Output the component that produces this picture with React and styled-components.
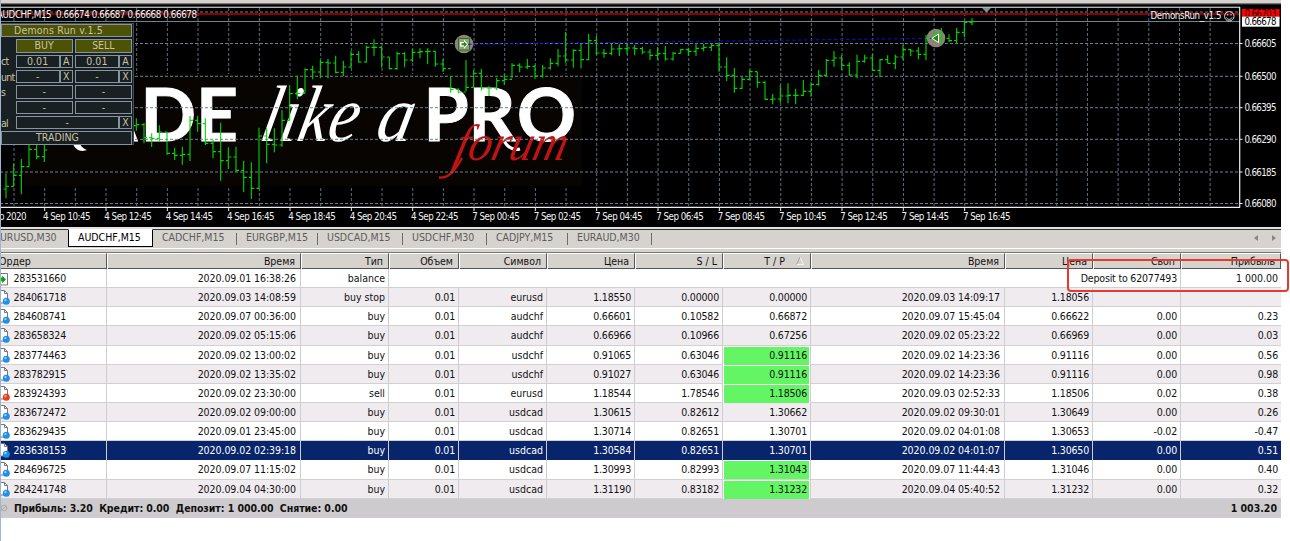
import styled, { createGlobalStyle, css } from "styled-components";

const GlobalStyle = createGlobalStyle`
  * {
    box-sizing: border-box;
  }

  body {
    margin: 0;
    background: #fff;
    font-family: "DejaVu Sans Condensed", "DejaVu Sans", sans-serif;
    font-stretch: condensed;
    font-size: 10.5px;
    color: #111;
    overflow: hidden;
  }
`;

const Terminal = styled.div`
  position: relative;
  width: 1290px;
  height: 541px;
  overflow: hidden;
  border-left: 1px solid #9fb4cf;
  background: #fff;
`;

const Content = styled.div`
  width: 1280px;
  display: flex;
  flex-direction: column;
`;

const ToolbarEdge = styled.div`
  height: 3px;
  background: #d6d3ce;
`;

const ChartWindow = styled.div`
  position: relative;
  height: 226px;
  background: #000;
`;

const ChartSvg = styled.svg`
  display: block;
  margin-left: -1px;

  text {
    font-family: "DejaVu Sans Condensed", "DejaVu Sans", sans-serif;
    font-stretch: condensed;
    font-size: 9.7px;
    fill: #f2f2f2;
  }

  .sans {
    font-family: Lato, sans-serif;
    font-weight: 700;
    font-stretch: normal;
    font-size: 73px;
    fill: #fff;
    stroke: #fff;
    stroke-width: 1px;
  }

  .script {
    font-family: "Liberation Serif", serif;
    font-style: italic;
    font-stretch: normal;
    font-size: 80px;
    fill: #fff;
  }

  .red {
    font-size: 51px;
    fill: #c01414;
  }
`;

/* trade panel */

const Panel = styled.div`
  position: absolute;
  left: 0;
  top: 20px;
  width: 133px;
  height: 122px;
  padding: 0 1px 1px 0;
  border-right: 1px solid #3d4c55;
  border-top: 1px solid #3d4c55;
  border-bottom: 1px solid #3d4c55;
  background: #182024;
  color: #cbc3a0;
  font-size: 10.5px;
  display: flex;
  flex-direction: column;
  gap: 2px;
`;

const PanelRow = styled.div`
  display: flex;
  gap: 2px;
  height: 13.35px;
`;

const PanelLabel = styled.div`
  width: 12.5px;
  display: flex;
  align-items: center;
  white-space: nowrap;
  letter-spacing: -0.7px;
`;

const Field = styled.div`
  flex: 1;
  display: flex;
  border: 1px solid #8794a0;
  background: ${(p) => (p.$olive ? "#4c5206" : "#182024")};
  line-height: 11.5px;
  text-align: center;
`;

const FieldText = styled.span`
  flex: 1;
  letter-spacing: ${(p) => p.$spacing || "0"};
`;

const FieldKey = styled.span`
  width: 13px;
  border-left: 2px solid #8794a0;
`;

/* tabs */

const Tabs = styled.div`
  display: flex;
  height: 20px;
  border-bottom: 1px solid #fff;
  background: #d6d3ce;
`;

const Tab = styled.div`
  position: relative;
  width: ${(p) => p.$w}px;
  height: 18px;
  padding: 0 0 0 9px;
  border-top: 1px solid #333;
  color: #5c5c5c;
  line-height: 15px;
  white-space: nowrap;
  letter-spacing: -0.02px;

  &::after {
    content: "";
    position: absolute;
    right: 0;
    top: 3px;
    width: 1px;
    height: 12px;
    background: #6b6b6b;
  }

  ${(p) =>
    p.$cut &&
    css`
      padding: 0;
      text-indent: -7px;
      &::after {
        display: none;
      }
    `}

  ${(p) =>
    p.$active &&
    css`
      border: 1px solid #000;
      border-top-color: #fff;
      background: #fff;
      color: #000;
      &::after {
        display: none;
      }
    `}
`;

const TabsRest = styled.div`
  flex: 1;
  border-top: 1px solid #333;
  display: flex;
  justify-content: flex-end;
  gap: 14px;
  padding: 5px 5px 0 0;
  height: 18px;
`;

/* history table */

const Table = styled.div`
  padding-top: 3px;
  background: #d6d3ce;
`;

const Row = styled.div`
  display: grid;
  grid-template-columns: 106px 194px 88px 70px 88px 88px 88px 88px 194px 88px 88px 100px;
  height: 19.15px;
  background: ${(p) => (p.$selected ? "#08246b" : p.$odd ? "#efebef" : "#fff")};
  color: ${(p) => (p.$selected ? "#fff" : "#111")};
  border-bottom: 1px solid ${(p) => (p.$selected ? "#08246b" : "#d2d0d2")};
`;

const HeadRow = styled(Row)`
  height: 17px;
  background: #d6d3ce;
  border-top: 1px solid #777;
  border-bottom: 1px solid #555;
`;

const Cell = styled.div`
  grid-column: span ${(p) => p.$span || 1};
  padding-right: 3px;
  border-right: 1px solid #cfcdcf;
  text-align: right;
  line-height: 19px;
  white-space: nowrap;
  letter-spacing: ${(p) => (p.$text ? "0" : "-0.18px")};
  ${(p) =>
    p.$date &&
    css`
      padding-right: 4px;
      letter-spacing: -0.06px;
    `}
  ${(p) =>
    p.$hit &&
    css`
      background: #63f563;
      box-shadow: inset 1px 1px #fff, inset -1px 0 #fff;
    `}
  &:last-child {
    border-right: 0;
  }
`;

const HeadCell = styled(Cell)`
  padding-right: 5px;
  border-right: 1px solid #555;
  border-left: 1px solid #fff;
  border-top: 1px solid #fff;
  line-height: 15px;
  letter-spacing: 0;
  &:first-child {
    text-align: left;
    border-left: 0;
    text-indent: -2px;
  }
  &:last-child {
    border-right: 1px solid #555;
  }
`;

const OrderCell = styled(Cell)`
  display: flex;
  align-items: center;
  text-align: left;
  gap: 3.5px;
`;

const Summary = styled.div`
  display: flex;
  justify-content: space-between;
  align-items: center;
  height: 19px;
  padding: 0 4px 0 0;
  background: #cecbce;
  font-weight: bold;
  white-space: pre;
`;

const SummaryText = styled.div`
  display: flex;
  align-items: center;
  gap: 5px;
  letter-spacing: -0.07px;
`;

const Highlight = styled.div`
  position: absolute;
  left: 1066px;
  top: 259px;
  width: 222px;
  height: 33px;
  border: 2px solid #e8392e;
  border-radius: 4px;
`;

// [high, low, close] in thirds of a pixel, one entry per M15 bar
const PITCH = 23 / 3;
const barGroups = [
  {
    start: 0,
    open: 567,
    bars: [
      [520, 595, 559], [491, 559, 526], [477, 583, 500], [430, 500, 448], [430, 478, 470], [430, 486, 450],
    ],
  },
  {
    start: 17,
    open: 377,
    bars: [
      [355, 392, 374], [369, 430, 413], [400, 441, 415], [376, 425, 396], [395, 464, 460], [443, 480, 466],
      [440, 494, 463], [348, 483, 361], [347, 395, 371], [355, 435, 430], [419, 475, 455], [368, 542, 482],
      [442, 507, 471], [440, 517, 511], [482, 577, 532], [487, 597, 565], [383, 567, 408], [385, 490, 433],
      [385, 457, 435], [330, 440, 361], [255, 361, 281], [227, 298, 280], [205, 280, 209], [197, 238, 216],
      [180, 235, 187], [177, 235, 189], [167, 220, 217], [183, 228, 201], [153, 205, 163], [153, 188, 186],
      [137, 188, 142], [118, 167, 142], [139, 203, 171], [170, 207, 206], [155, 209, 161], [157, 202, 180],
      [147, 186, 157], [145, 175, 155], [145, 193, 154], [152, 200, 192], [177, 216, 206], [228, 278, 268],
      [265, 280, 276], [180, 273, 262], [211, 262, 220], [207, 272, 264], [258, 288, 264], [233, 270, 242],
      [221, 255, 238], [190, 235, 196], [190, 217, 201], [177, 207, 199], [195, 236, 228], [195, 233, 204],
      [175, 209, 190], [147, 199, 168], [96, 188, 180], [148, 203, 151], [132, 205, 179], [102, 180, 122],
      [108, 165, 159], [147, 173, 160], [131, 166, 147], [133, 168, 146], [132, 163, 144], [134, 166, 146],
      [140, 163, 156], [147, 180, 166], [141, 180, 161], [138, 182, 177], [156, 182, 160], [147, 160, 149],
      [143, 168, 154], [133, 168, 145], [131, 154, 142], [133, 153, 136], [127, 215, 201], [172, 243, 226],
      [204, 278, 265], [231, 268, 238], [209, 241, 215], [216, 263, 247], [244, 300, 298], [282, 313, 297],
      [256, 308, 288], [250, 310, 286], [266, 312, 286], [240, 288, 274], [247, 290, 253], [210, 257, 226],
      [177, 228, 181], [153, 200, 174], [166, 210, 196], [187, 227, 225], [164, 235, 184], [164, 188, 174],
      [162, 213, 211], [177, 232, 179], [166, 190, 190], [164, 207, 171], [136, 180, 149], [147, 168, 153],
      [142, 178, 163], [105, 181, 115], [90, 125, 100], [84, 136, 115], [103, 126, 122], [84, 130, 97],
      [67, 112, 67], [55, 75, 65],
    ],
  },
];

const prices = ["0.66605", "0.66500", "0.66395", "0.66290", "0.66185", "0.66080"];
const gridY = [12, 43.5, 76.3, 107.7, 139.3, 172, 203.5];
const gridX = Array.from({ length: 40 }, (_, i) => 14 + i * 30.67);

const times = [
  "4 Sep 10:45", "4 Sep 12:45", "4 Sep 14:45", "4 Sep 16:45", "4 Sep 18:45", "4 Sep 20:45",
  "4 Sep 22:45", "7 Sep 00:45", "7 Sep 02:45", "7 Sep 04:45", "7 Sep 06:45", "7 Sep 08:45",
  "7 Sep 10:45", "7 Sep 12:45", "7 Sep 14:45", "7 Sep 16:45",
];

const tabs = [
  { name: "EURUSD,M30", w: 67, cut: true },
  { name: "AUDCHF,M15", w: 85, active: true },
  { name: "CADCHF,M15", w: 84 },
  { name: "EURGBP,M15", w: 81 },
  { name: "USDCAD,M15", w: 85 },
  { name: "USDCHF,M30", w: 84 },
  { name: "CADJPY,M15", w: 81 },
  { name: "EURAUD,M30", w: 84 },
];

const heads = ["Ордер", "Время", "Тип", "Объем", "Символ", "Цена", "S / L", "T / P", "Время", "Цена", "Своп", "Прибыль"];

const orders = [
  ["284061718", "2020.09.03 14:08:59", "buy stop", "0.01", "eurusd", "1.18550", "0.00000", "0.00000", "2020.09.03 14:09:17", "1.18056", "", ""],
  ["284608741", "2020.09.07 00:36:00", "buy", "0.01", "audchf", "0.66601", "0.10582", "0.66872", "2020.09.07 15:45:04", "0.66622", "0.00", "0.23"],
  ["283658324", "2020.09.02 05:15:06", "buy", "0.01", "audchf", "0.66966", "0.10966", "0.67256", "2020.09.02 05:23:22", "0.66969", "0.00", "0.03"],
  ["283774463", "2020.09.02 13:00:02", "buy", "0.01", "usdchf", "0.91065", "0.63046", "0.91116", "2020.09.02 14:23:36", "0.91116", "0.00", "0.56"],
  ["283782915", "2020.09.02 13:35:02", "buy", "0.01", "usdchf", "0.91027", "0.63046", "0.91116", "2020.09.02 14:23:36", "0.91116", "0.00", "0.98"],
  ["283924393", "2020.09.02 23:30:00", "sell", "0.01", "eurusd", "1.18544", "1.78546", "1.18506", "2020.09.03 02:52:33", "1.18506", "0.02", "0.38"],
  ["283672472", "2020.09.02 09:00:00", "buy", "0.01", "usdcad", "1.30615", "0.82612", "1.30662", "2020.09.02 09:30:01", "1.30649", "0.00", "0.26"],
  ["283629435", "2020.09.01 23:45:00", "buy", "0.01", "usdcad", "1.30714", "0.82651", "1.30701", "2020.09.02 04:01:08", "1.30653", "-0.02", "-0.47"],
  ["283638153", "2020.09.02 02:39:18", "buy", "0.01", "usdcad", "1.30584", "0.82651", "1.30701", "2020.09.02 04:01:07", "1.30650", "0.00", "0.51"],
  ["284696725", "2020.09.07 11:15:02", "buy", "0.01", "usdcad", "1.30993", "0.82993", "1.31043", "2020.09.07 11:44:43", "1.31046", "0.00", "0.40"],
  ["284241748", "2020.09.04 04:30:00", "buy", "0.01", "usdcad", "1.31190", "0.83182", "1.31232", "2020.09.04 05:40:52", "1.31232", "0.00", "0.32"],
];
const hits = ["283774463", "283782915", "283924393", "284696725", "284241748"];
const selectedOrder = "283638153";

function barPath() {
  let d = "";
  barGroups.forEach(({ start, open, bars }) => {
    let prev = open;
    bars.forEach(([high, low, close], i) => {
      const x = 6 + (start + i) * PITCH;
      d += `M${x} ${high / 3}V${low / 3}M${x - 2.5} ${prev / 3}H${x}M${x} ${close / 3}H${x + 3}`;
      prev = close;
    });
  });
  return d;
}

function OrderIcon({ kind }) {
  if (kind === "balance") {
    return (
      <svg width="9" height="16" viewBox="0 0 9 16">
        <path d="M-1 2.5H6.5V14H-1" fill="#fff" stroke="#777" />
        <path d="M-1 6.5H1.2V4.5L5 8.5L1.2 12.3V10.3H-1Z" fill="#12a012" />
      </svg>
    );
  }
  const color = kind === "sell" ? "#e8401c" : "#1d8fe8";
  return (
    <svg width="9" height="17" viewBox="0 0 9 17">
      <path d="M-1 1.5H3.5L6.5 4.5V14H-1" fill="#fff" stroke="#777" />
      <path d="M3.5 1.5V4.5H6.5" fill="none" stroke="#777" />
      <circle cx="5.3" cy="12.3" r="3.5" fill={color} />
      <circle cx="4.4" cy="11.2" r="1.1" fill="#fff" fillOpacity="0.6" />
    </svg>
  );
}

function Chart() {
  return (
    <ChartSvg width="1281" height="226" viewBox="0 3 1281 226">
      <rect x="0" y="3" width="1281" height="1.3" fill="#777" />
      <rect x="0" y="6.7" width="1240" height="1.1" fill="#ddd" />
      <g stroke="#6c8194" fill="none">
        {gridX.map((x) => (
          <path key={x} d={`M${x} 8V206`} strokeDasharray="3 2" strokeOpacity="0.85" />
        ))}
      </g>
      <rect x="24" y="74" width="558" height="112" fill="#080402" />
      <text className="sans" x="88" y="141" textLength="49" lengthAdjust="spacingAndGlyphs">A</text>
      <text className="sans" x="140.5 196" y="141">DE</text>
      <path d="M73 144C77 153 84 151 87 150C82 148 80 145 78 140Z" fill="#fff" />
      <g transform="translate(258 141) skewX(-12)">
        <text className="script" x="0" y="0" textLength="97" lengthAdjust="spacingAndGlyphs">like</text>
        <text className="script" x="116" y="0" textLength="36" lengthAdjust="spacingAndGlyphs">a</text>
      </g>
      <text className="sans" x="423.5 468.5 517" y="141">PRO</text>
      <path d="M503 139C507 147 512 151 520 149" fill="none" stroke="#fff" strokeWidth="3" />
      <g transform="translate(453 160) skewX(-14)">
        <text className="script red" x="0" y="0" textLength="111" lengthAdjust="spacingAndGlyphs">forum</text>
      </g>
      <path d="M439 177.5C449 179 456 169 462 158" fill="none" stroke="#c01414" strokeWidth="2.4" />
      <g stroke="#6c8194" fill="none" strokeDasharray="3 2">
        {gridY.map((y) => (
          <path key={y} d={`M0 ${y}H1239`} />
        ))}
      </g>
      <path d="M0 21.5H1240" stroke="#6f8292" />
      <path d="M0 14H1240" stroke="#b80000" strokeWidth="1.6" />
      <circle cx="464" cy="44" r="9.3" fill="#8c8478" />
      <circle cx="936" cy="38" r="9.3" fill="#94807a" />
      <rect x="458.5" y="38.5" width="11" height="11.5" fill="#a09a80" stroke="#148014" />
      <path d="M460 42H464V39.5L468 44.3L464 49V46.5H460Z" fill="#fff" />
      <path d="M461.5 43.3H464V41.5L467 44.3L464 47V45.3H461.5Z" fill="#109010" />
      <path d="M468 44.3L936 38.3" stroke="#0a0af0" strokeDasharray="3.5 2.5" />
      <path d={barPath()} stroke="#00d600" strokeWidth="1.1" fill="none" />
      <path d="M932 38.3L938.5 34V42.5Z" fill="#0a900a" stroke="#fff" strokeWidth="1" />
      <path d="M982 8H991L986.5 12.5Z" fill="#7890a4" />
      <path d="M1239.7 7V207.4M0 207.4H1240" stroke="#eee" strokeWidth="1.2" />
      <text x="-3" y="18" textLength="200" xmlSpace="preserve">AUDCHF,M15&#160; 0.66674 0.66687 0.66668 0.66678</text>
      <text x="1150.5" y="18.7" textLength="71">DemonsRun_v1.5</text>
      <g stroke="#eee" fill="none" strokeWidth="0.9">
        <circle cx="1229.3" cy="16.3" r="4.7" />
        <path d="M1226.5 17.5C1227.5 20 1231 20 1232 17.5M1227.7 14V15.6M1231 14V15.6" />
      </g>
      <rect x="1242" y="9" width="37.5" height="10" fill="#f00" />
      <text x="1244.5" y="17" textLength="32" style={{ fill: "#300" }}>0.66703</text>
      <rect x="1242" y="16.7" width="37.5" height="10" fill="#fff" />
      <text x="1244.5" y="25.3" textLength="32" style={{ fill: "#000" }}>0.66678</text>
      {prices.map((p, i) => (
        <g key={p}>
          <path d={`M1240 ${gridY[i + 1]}H1242.5`} stroke="#eee" />
          <text x="1244.5" y={gridY[i + 1] + 3.6} textLength="32">{p}</text>
        </g>
      ))}
      <text x="-18" y="219.5" textLength="44.5">4 Sep 2020</text>
      {times.map((t, i) => (
        <g key={t}>
          <path d={`M${44.7 + i * 61.33} 207V211`} stroke="#eee" />
          <text x={43 + i * 61.33} y="219.5" textLength="47.5">{t}</text>
        </g>
      ))}
      <rect x="0" y="227" width="1281" height="2" fill="#e4e2de" />
    </ChartSvg>
  );
}

function TradePanel() {
  return (
    <Panel>
      <PanelRow>
        <Field $olive><FieldText $spacing="0.2px">Demons Run v.1.5&nbsp;&nbsp;&nbsp;&nbsp;&nbsp;</FieldText></Field>
      </PanelRow>
      <PanelRow>
        <PanelLabel />
        <Field $olive><FieldText>BUY</FieldText></Field>
        <Field $olive><FieldText>SELL</FieldText></Field>
      </PanelRow>
      {[["ct", "0.01", "A"], ["unt", "-", "X"]].map(([label, value, key]) => (
        <PanelRow key={label}>
          <PanelLabel>{label}</PanelLabel>
          <Field><FieldText>{value}</FieldText><FieldKey>{key}</FieldKey></Field>
          <Field><FieldText>{value}</FieldText><FieldKey>{key}</FieldKey></Field>
        </PanelRow>
      ))}
      {["s", ""].map((label) => (
        <PanelRow key={label}>
          <PanelLabel>{label}</PanelLabel>
          <Field><FieldText>-</FieldText></Field>
          <Field><FieldText>-</FieldText></Field>
        </PanelRow>
      ))}
      <PanelRow>
        <PanelLabel>al</PanelLabel>
        <Field><FieldText>-</FieldText><FieldKey>X</FieldKey></Field>
      </PanelRow>
      <PanelRow>
        <Field><FieldText>TRADING&nbsp;&nbsp;&nbsp;&nbsp;&nbsp;&nbsp;</FieldText></Field>
      </PanelRow>
    </Panel>
  );
}

export default function App() {
  return (
    <Terminal>
      <GlobalStyle />
      <Content>
        <ToolbarEdge />
        <ChartWindow>
          <Chart />
          <TradePanel />
        </ChartWindow>
        <Tabs>
          {tabs.map((t) => (
            <Tab key={t.name} $w={t.w} $active={t.active} $cut={t.cut}>
              {t.name}
            </Tab>
          ))}
          <TabsRest>
            <svg width="4" height="6" viewBox="0 0 4 6"><path d="M4 0V6L0 3Z" fill="#888" /></svg>
            <svg width="4" height="6" viewBox="0 0 4 6"><path d="M0 0V6L4 3Z" fill="#888" /></svg>
          </TabsRest>
        </Tabs>
        <Table>
          <HeadRow>
            {heads.map((h, i) => (
              <HeadCell key={i}>
                {h}
                {i === 7 && (
                  <svg width="20" height="9" viewBox="2 0 20 9">
                    <path d="M13.5 8.5L17 1L20.5 8.5Z" fill="none" stroke="#f6f6f6" />
                    <path d="M13.5 8.5L17 1" stroke="#999" />
                  </svg>
                )}
              </HeadCell>
            ))}
          </HeadRow>
          <Row>
            <OrderCell><OrderIcon kind="balance" />283531660</OrderCell>
            <Cell $date>2020.09.01 16:38:26</Cell>
            <Cell $text>balance</Cell>
            <Cell $span={8}>Deposit to 62077493</Cell>
            <Cell $text>1 000.00</Cell>
          </Row>
          {orders.map(([id, ...cells], r) => (
            <Row key={id} $odd={r % 2 === 0} $selected={id === selectedOrder}>
              <OrderCell><OrderIcon kind={cells[1]} />{id}</OrderCell>
              {cells.map((c, i) => (
                <Cell
                  key={i}
                  $text={i === 1 || i === 3}
                  $date={i === 0 || i === 7}
                  $hit={i === 6 && hits.includes(id)}
                >
                  {c}
                </Cell>
              ))}
            </Row>
          ))}
        </Table>
        <Summary>
          <SummaryText>
            <svg width="8" height="10" viewBox="0 0 8 10">
              <circle cx="3" cy="5" r="3" fill="none" stroke="#aaa" />
              <path d="M1 7L5 3" stroke="#aaa" />
            </svg>
            {"Прибыль: 3.20  Кредит: 0.00  Депозит: 1 000.00  Снятие: 0.00"}
          </SummaryText>
          <span>1 003.20</span>
        </Summary>
      </Content>
      <Highlight />
    </Terminal>
  );
}
